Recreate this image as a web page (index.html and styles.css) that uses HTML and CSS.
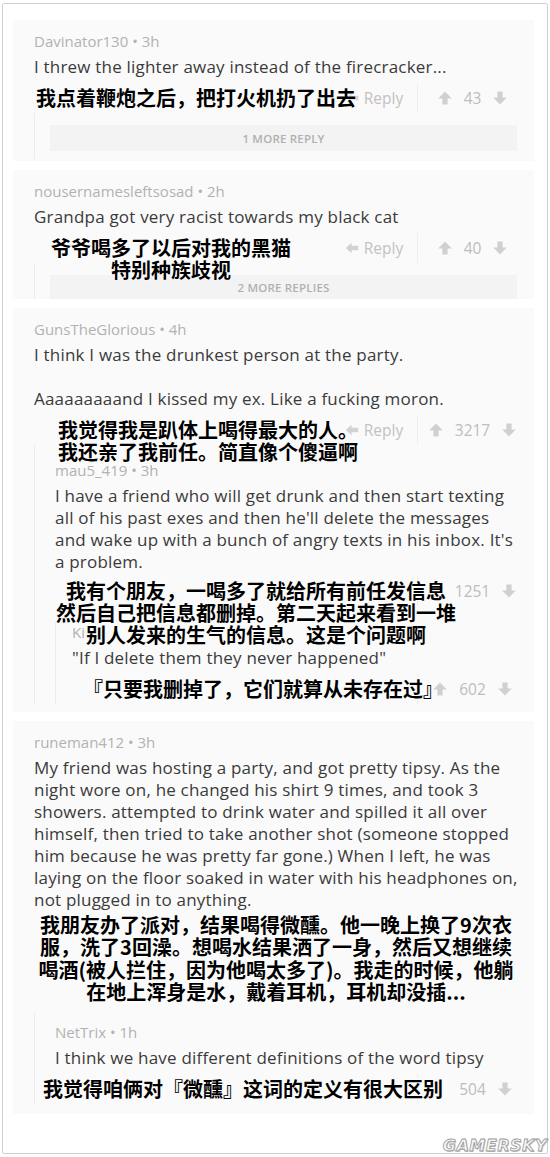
FILE: index.html
```html
<!DOCTYPE html>
<html lang="zh-CN">
<head>
<meta charset="utf-8">
<title>Comments</title>
<link rel="stylesheet" href="styles.css">
</head>
<body>
<svg width="0" height="0" class="defs" aria-hidden="true">
  <defs>
    <symbol id="up" viewBox="0 0 16 16"><path d="M8 1.5 L14.8 8.6 H10.6 V14.5 H5.4 V8.6 H1.2 Z"/></symbol>
    <symbol id="down" viewBox="0 0 16 16"><path d="M8 14.5 L14.8 7.4 H10.6 V1.5 H5.4 V7.4 H1.2 Z"/></symbol>
    <symbol id="reply" viewBox="0 0 14 12"><path d="M0.8 6 L6.6 0.8 V3.8 H13.2 V8.2 H6.6 V11.2 Z"/></symbol>
  </defs>
</svg>
<div class="frame">

  <section class="card card-1">
    <div class="meta">Davinator130 • 3h</div>
    <p class="body">I threw the lighter away instead of the firecracker...</p>
    <div class="actions">
      <div class="cn cn-1">我点着鞭炮之后，把打火机扔了出去</div>
      <span class="reply"><svg class="ico-reply"><use href="#reply"/></svg>Reply</span>
      <span class="votes"><svg class="ico"><use href="#up"/></svg><span class="count">43</span><svg class="ico"><use href="#down"/></svg></span>
    </div>
    <div class="thread more-wrap">
      <div class="more">1 MORE REPLY</div>
    </div>
  </section>

  <section class="card card-2">
    <div class="meta">nousernamesleftsosad • 2h</div>
    <p class="body">Grandpa got very racist towards my black cat</p>
    <div class="actions">
      <div class="cn cn-2">爷爷喝多了以后对我的黑猫<br>特别种族歧视</div>
      <span class="reply"><svg class="ico-reply"><use href="#reply"/></svg>Reply</span>
      <span class="votes"><svg class="ico"><use href="#up"/></svg><span class="count">40</span><svg class="ico"><use href="#down"/></svg></span>
    </div>
    <div class="thread more-wrap">
      <div class="more more-short">2 MORE REPLIES</div>
    </div>
  </section>

  <section class="card card-3">
    <div class="meta">GunsTheGlorious • 4h</div>
    <p class="body">I think I was the drunkest person at the party.<br><br>Aaaaaaaaand I kissed my ex. Like a fucking moron.</p>
    <div class="actions">
      <div class="cn cn-3">我觉得我是趴体上喝得最大的人。<br>我还亲了我前任。简直像个傻逼啊</div>
      <span class="reply"><svg class="ico-reply"><use href="#reply"/></svg>Reply</span>
      <span class="votes"><svg class="ico"><use href="#up"/></svg><span class="count">3217</span><svg class="ico"><use href="#down"/></svg></span>
    </div>
    <div class="thread nested nested-a">
      <div class="meta">mau5_419 • 3h</div>
      <p class="body">I have a friend who will get drunk and then start texting<br>all of his past exes and then he'll delete the messages<br>and wake up with a bunch of angry texts in his inbox. It's<br>a problem.</p>
      <div class="actions actions-tight">
        <div class="cn cn-4">我有个朋友，一喝多了就给所有前任发信息<br>然后自己把信息都删掉。第二天起来看到一堆<br>别人发来的生气的信息。这是个问题啊</div>
        <span class="reply covered"><svg class="ico-reply"><use href="#reply"/></svg>Reply</span>
        <span class="votes"><svg class="ico"><use href="#up"/></svg><span class="count">1251</span><svg class="ico"><use href="#down"/></svg></span>
      </div>
      <div class="thread deep">
        <div class="meta">Ki</div>
        <p class="body">"If I delete them they never happened"</p>
        <div class="actions">
          <div class="cn cn-5">『只要我删掉了，它们就算从未存在过』</div>
          <span class="reply covered"><svg class="ico-reply"><use href="#reply"/></svg>Reply</span>
          <span class="votes"><svg class="ico"><use href="#up"/></svg><span class="count">602</span><svg class="ico"><use href="#down"/></svg></span>
        </div>
      </div>
    </div>
  </section>

  <section class="card card-4">
    <div class="meta">runeman412 • 3h</div>
    <p class="body">My friend was hosting a party, and got pretty tipsy. As the<br>night wore on, he changed his shirt 9 times, and took 3<br>showers. attempted to drink water and spilled it all over<br>himself, then tried to take another shot (someone stopped<br>him because he was pretty far gone.) When I left, he was<br>laying on the floor soaked in water with his headphones on,<br>not plugged in to anything.</p>
    <div class="actions">
      <span class="reply covered"><svg class="ico-reply"><use href="#reply"/></svg>Reply</span>
      <span class="votes"><svg class="ico covered"><use href="#up"/></svg><span class="count covered">742</span><svg class="ico covered"><use href="#down"/></svg></span>
    </div>
    <div class="cn-block">我朋友办了派对，结果喝得微醺。他一晚上换了9次衣<br>服，洗了3回澡。想喝水结果洒了一身，然后又想继续<br>喝酒(被人拦住，因为他喝太多了)。我走的时候，他躺<br>在地上浑身是水，戴着耳机，耳机却没插...</div>
    <div class="thread nested nested-b">
      <div class="meta">NetTrix • 1h</div>
      <p class="body">I think we have different definitions of the word tipsy</p>
      <div class="actions">
        <div class="cn cn-6">我觉得咱俩对『微醺』这词的定义有很大区别</div>
        <span class="reply covered"><svg class="ico-reply"><use href="#reply"/></svg>Reply</span>
        <span class="votes"><svg class="ico covered"><use href="#up"/></svg><span class="count">504</span><svg class="ico"><use href="#down"/></svg></span>
      </div>
    </div>
  </section>

  <div class="watermark">GAMERSKY</div>
</div>
</body>
</html>
```

FILE: styles.css
```css
* { box-sizing: border-box; }

html, body {
  margin: 0;
  padding: 0;
  background: #ffffff;
}

body {
  font-family: "Open Sans", "Liberation Sans", "Noto Sans CJK SC", sans-serif;
  color: #383838;
}

.defs {
  position: absolute;
  width: 0;
  height: 0;
  overflow: hidden;
}

.frame {
  position: relative;
  margin: 3px 2px 0 2px;
  height: 1151px;
  border: 1px solid #cfcfcf;
  border-radius: 2px;
  padding: 16px 13px 0 10px;
  display: flex;
  flex-direction: column;
  gap: 9px;
}

.card {
  background: #fafafa;
  padding: 11px 7px 2px 21px;
}

.card-2 { padding-bottom: 0; }
.card-3 { padding-bottom: 8px; }
.card-4 { padding-bottom: 10px; }

.meta {
  font-size: 15px;
  line-height: 20px;
  color: #b2b2b2;
  white-space: nowrap;
}

.body {
  margin: 5px 0 0 0;
  font-size: 17px;
  letter-spacing: 0.2px;
  line-height: 22px;
  color: #3a3a3a;
  white-space: nowrap;
}

.actions {
  position: relative;
  margin-top: 5px;
  height: 30px;
  display: flex;
  align-items: center;
  justify-content: flex-end;
}

.actions-tight { margin-top: 3px; }

.reply {
  width: 86px;
  height: 30px;
  display: flex;
  align-items: center;
  justify-content: center;
  gap: 5px;
  font-size: 15.5px;
  color: #c2c2c2;
}

.ico-reply {
  width: 14px;
  height: 12px;
  fill: #d2d2d2;
}

.votes {
  width: 110px;
  height: 30px;
  border-left: 1px solid #efefef;
  display: flex;
  align-items: center;
  justify-content: center;
  gap: 11px;
}

.ico {
  width: 16px;
  height: 16px;
  fill: #d0d0d0;
}

.count {
  font-size: 15.5px;
  color: #bdbdbd;
}

/* parts of the screenshot hidden under the pasted captions */
.covered { visibility: hidden; }

/* Chinese captions laid over the screenshot */
.cn, .cn-block {
  font-family: "Noto Sans CJK SC", sans-serif;
  font-weight: 700;
  font-size: 20px;
  line-height: 22px;
  color: #000;
  white-space: nowrap;
  text-shadow: 0 0 2px #fff, 0 0 2px #fff;
}

.cn {
  position: absolute;
  top: 4px;
  z-index: 2;
}

.cn-1 { left: 2px; }
.cn-2 { left: 16px; width: 242px; text-align: center; }
.cn-3 { left: 24px; }
.cn-4 { left: 0; width: 402px; text-align: center; }
.cn-5 { left: 11px; }
.cn-6 { left: -12px; }

.cn-block {
  position: relative;
  z-index: 2;
  margin: -32px 0 0 -1px;
  text-align: center;
  width: 486px;
  line-height: 22.3px;
}

/* threads */
.thread {
  border-left: 1px solid #ececec;
}

.more-wrap {
  padding: 12px 0 8px 15px;
}

.card-2 .more-wrap { padding-bottom: 0; }

.more {
  height: 26px;
  margin-right: 10px;
  background: #f3f3f3;
  display: flex;
  align-items: center;
  justify-content: center;
  font-size: 11.5px;
  font-weight: 600;
  letter-spacing: 0.2px;
  color: #b0b0b0;
}

.more-short { height: 24px; }

.nested {
  padding-left: 20px;
}

.nested-a { padding-top: 15px; }

.nested-b {
  margin-top: 10px;
  padding-top: 9px;
}

.deep {
  margin-top: 16px;
  padding-left: 16px;
}

.watermark {
  position: absolute;
  right: 0;
  bottom: -2px;
  font-family: "DejaVu Sans", sans-serif;
  font-weight: 700;
  font-style: italic;
  font-size: 16px;
  letter-spacing: 0.5px;
  color: #f6f6f6;
  -webkit-text-stroke: 0.8px #9a9a9a;
  text-shadow: 1px 1px 0 #c8c8c8;
}
```
